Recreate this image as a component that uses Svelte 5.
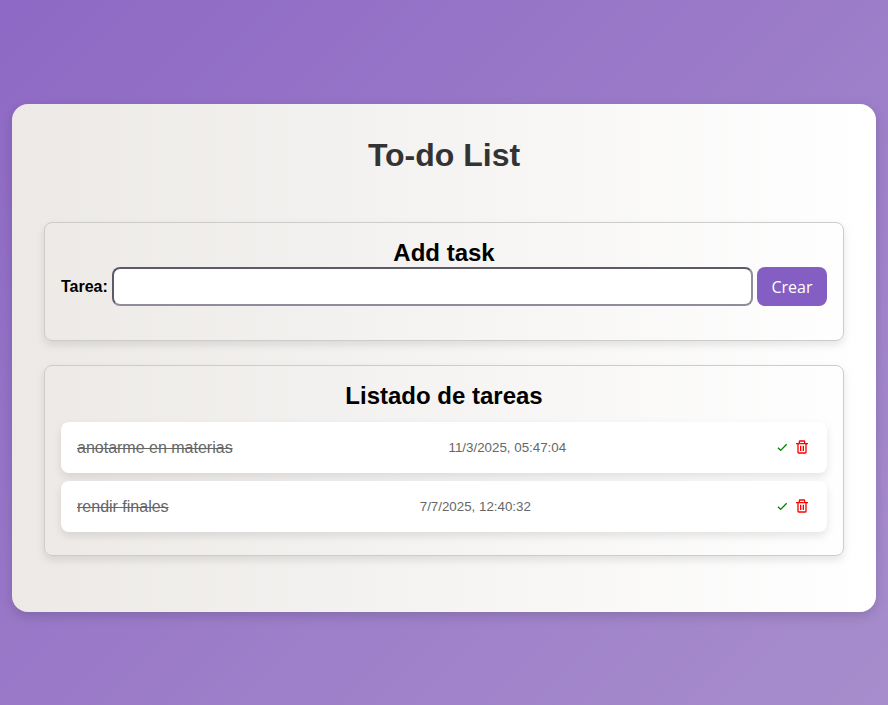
<script>
  let tasks = $state([
    { id: 1, name: 'anotarme en materias', date: '11/3/2025, 05:47:04', done: true },
    { id: 2, name: 'rendir finales', date: '7/7/2025, 12:40:32', done: true }
  ]);
  let draft = $state('');

  function create(event) {
    event.preventDefault();
    const name = draft.trim();
    if (!name) return;
    tasks.push({ id: Date.now(), name, date: new Date().toLocaleString('es-AR', { hour12: false }), done: false });
    draft = '';
  }

  function remove(id) {
    tasks = tasks.filter((task) => task.id !== id);
  }
</script>

<div class="page">
  <main class="container">
    <h1>To-do List</h1>

    <section class="panel">
      <h2>Add task</h2>
      <form onsubmit={create}>
        <label for="task">Tarea:</label>
        <input id="task" type="text" autocomplete="off" bind:value={draft} />
        <button class="create" type="submit">Crear</button>
      </form>
    </section>

    <section class="panel">
      <h2>Listado de tareas</h2>
      <ul>
        {#each tasks as task (task.id)}
          <li>
            <span class="name" class:done={task.done}>{task.name}</span>
            <span class="date">{task.date}</span>
            <div class="actions">
              <button class="icon check" type="button" aria-label="Completar" onclick={() => (task.done = !task.done)}>
                <svg viewBox="0 0 24 24" aria-hidden="true">
                  <path d="m10 15.586-3.293-3.293-1.414 1.414L10 18.414l9.707-9.707-1.414-1.414z" />
                </svg>
              </button>
              <button class="icon trash" type="button" aria-label="Eliminar" onclick={() => remove(task.id)}>
                <svg viewBox="0 0 24 24" aria-hidden="true">
                  <path d="M5 20a2 2 0 0 0 2 2h10a2 2 0 0 0 2-2V8h2V6h-4V4a2 2 0 0 0-2-2H9a2 2 0 0 0-2 2v2H3v2h2zM9 4h6v2H9zM8 8h9v12H7V8z" />
                  <path d="M9 10h2v8H9zm4 0h2v8h-2z" />
                </svg>
              </button>
            </div>
          </li>
        {/each}
      </ul>
    </section>
  </main>
</div>

<style>
  :global(body) {
    margin: 0;
  }

  .page {
    box-sizing: border-box;
    min-height: 100vh;
    padding: 23px 12px 12px;
    display: flex;
    align-items: center;
    justify-content: center;
    background: linear-gradient(135deg, #8e69c5, #a78dcc);
    font-family: "Liberation Sans", Arial, sans-serif;
    font-size: 16px;
  }

  .container {
    box-sizing: border-box;
    flex: 1;
    max-width: 1200px;
    padding: 32px;
    border-radius: 16px;
    background: linear-gradient(to right, #ece9e6, #ffffff);
    box-shadow: 0 4px 12px rgba(0, 0, 0, 0.15);
  }

  h1 {
    margin: 0 0 48px;
    font-size: 32px;
    line-height: 38px;
    text-align: center;
    color: #333;
  }

  .panel {
    margin-bottom: 24px;
    padding: 16px;
    border: 1px solid #ccc;
    border-radius: 8px;
    box-shadow: 0 4px 8px rgba(0, 0, 0, 0.1);
  }

  h2 {
    margin: 0;
    font-size: 24px;
    line-height: 28px;
    text-align: center;
    color: #000;
  }

  form {
    display: flex;
    align-items: center;
    gap: 4px;
    margin-bottom: 18px;
  }

  label {
    font-weight: bold;
  }

  input {
    box-sizing: border-box;
    flex: 1;
    min-width: 0;
    height: 39px;
    padding: 8px;
    border: 2px solid;
    border-color: #5e5b69 #8f8c9c #8f8c9c #5e5b69;
    border-radius: 8px;
    background: #fff;
    font: inherit;
  }

  button {
    border: 0;
    cursor: pointer;
  }

  .create {
    width: 70px;
    height: 39px;
    padding: 0;
    border-radius: 8px;
    background: #845ec2;
    color: #fff;
    font: 16px "Open Sans", "Noto Sans", sans-serif;
  }

  ul {
    display: flex;
    flex-direction: column;
    gap: 8px;
    margin: 12px 0 7px;
    padding: 0;
    list-style: none;
  }

  li {
    box-sizing: border-box;
    min-height: 51px;
    padding: 8px 16px;
    display: flex;
    align-items: center;
    justify-content: space-between;
    border-radius: 8px;
    background: #fff;
    box-shadow: 0 4px 8px rgba(0, 0, 0, 0.1);
    color: #666;
  }

  .name {
    margin-right: 8px;
  }

  .done {
    text-decoration: line-through;
  }

  .date {
    font-size: smaller;
  }

  .actions {
    display: flex;
    gap: 4px;
    padding: 0 1px 2px 0;
  }

  .icon {
    padding: 0;
    background: none;
  }

  .icon svg {
    display: block;
    width: 16px;
    height: 16px;
    fill: currentColor;
  }

  .check {
    color: green;
  }

  .trash {
    color: red;
  }
</style>
